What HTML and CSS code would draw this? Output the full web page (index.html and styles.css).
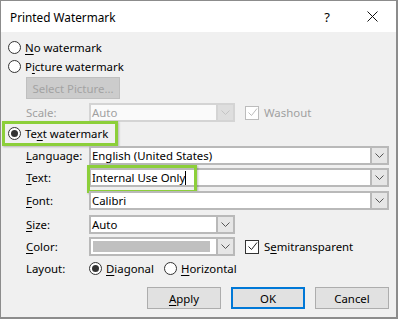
FILE: index.html
```html
<!DOCTYPE html>
<html lang="en">
<head>
    <meta charset="UTF-8">
    <title>Printed Watermark</title>
    <link rel="stylesheet" href="styles.css">
</head>
<body>

    <div class="dialog">
        <div class="titlebar">
            <span class="title">Printed Watermark</span>
            <span class="help">?</span>
            <span class="close">
                <svg width="11" height="11" viewBox="0 0 11 11"><path d="M0.5 0.5L10.5 10.5M10.5 0.5L0.5 10.5" stroke="#111" stroke-width="1" fill="none"/></svg>
            </span>
        </div>

        <div class="content">
            <div class="option opt-first"><span class="radio"></span><span><u>N</u>o watermark</span></div>
            <div class="option opt-second"><span class="radio"></span><span>P<u>i</u>cture watermark</span></div>

            <div class="indent">
                <button class="btn btn-disabled" type="button">Select Picture...</button>
            </div>

            <div class="field-row row-scale disabled">
                <span class="label">Scale:</span>
                <div class="combo combo-small">
                    <span class="value">Auto</span>
                    <span class="drop"><svg width="9" height="5" viewBox="0 0 9 5"><path d="M0.5 0.5L4.5 4.5L8.5 0.5" stroke="#c4c4c4" fill="none"/></svg></span>
                </div>
                <span class="check"><span class="box"><svg width="11" height="11" viewBox="0 0 11 11"><path d="M1.5 5.5L4.5 8.5L10 1.5" stroke="#bcbcbc" fill="none"/></svg></span><span>Washout</span></span>
            </div>

            <div class="option opt-text highlight"><span class="radio on"></span><span>Te<u>x</u>t watermark</span></div>

            <div class="field-row row-lang">
                <span class="label"><u>L</u>anguage:</span>
                <div class="combo">
                    <span class="value">English (United States)</span>
                    <span class="drop"><svg width="9" height="5" viewBox="0 0 9 5"><path d="M0.5 0.5L4.5 4.5L8.5 0.5" stroke="#555" fill="none"/></svg></span>
                </div>
            </div>

            <div class="field-row row-text">
                <span class="label"><u>T</u>ext:</span>
                <div class="combo highlight">
                    <span class="value">Internal Use Only<span class="caret"></span></span>
                    <span class="drop"><svg width="9" height="5" viewBox="0 0 9 5"><path d="M0.5 0.5L4.5 4.5L8.5 0.5" stroke="#555" fill="none"/></svg></span>
                </div>
            </div>

            <div class="field-row row-font">
                <span class="label"><u>F</u>ont:</span>
                <div class="combo">
                    <span class="value">Calibri</span>
                    <span class="drop"><svg width="9" height="5" viewBox="0 0 9 5"><path d="M0.5 0.5L4.5 4.5L8.5 0.5" stroke="#555" fill="none"/></svg></span>
                </div>
            </div>

            <div class="field-row row-size">
                <span class="label"><u>S</u>ize:</span>
                <div class="combo combo-small">
                    <span class="value">Auto</span>
                    <span class="drop"><svg width="9" height="5" viewBox="0 0 9 5"><path d="M0.5 0.5L4.5 4.5L8.5 0.5" stroke="#555" fill="none"/></svg></span>
                </div>
            </div>

            <div class="field-row row-color">
                <span class="label"><u>C</u>olor:</span>
                <div class="combo combo-small">
                    <span class="swatch"></span>
                    <span class="drop"><svg width="9" height="5" viewBox="0 0 9 5"><path d="M0.5 0.5L4.5 4.5L8.5 0.5" stroke="#555" fill="none"/></svg></span>
                </div>
                <span class="check"><span class="box"><svg width="11" height="11" viewBox="0 0 11 11"><path d="M1.5 5.5L4.5 8.5L10 1.5" stroke="#222" fill="none"/></svg></span><span>S<u>e</u>mitransparent</span></span>
            </div>

            <div class="field-row row-layout">
                <span class="label">Layout:</span>
                <span class="choice"><span class="radio on"></span><span><u>D</u>iagonal</span></span>
                <span class="choice"><span class="radio"></span><span><u>H</u>orizontal</span></span>
            </div>

            <div class="buttons">
                <button class="btn" type="button"><u>A</u>pply</button>
                <button class="btn btn-default" type="button">OK</button>
                <button class="btn" type="button">Cancel</button>
            </div>
        </div>
    </div>

</body>
</html>
```

FILE: styles.css
```css
body {
    margin: 0;
    font-family: "Noto Sans", "Open Sans", sans-serif;
    font-size: 11.4px;
    color: #000;
    background: #fff;
}

.dialog {
    width: 398px;
    height: 319px;
    box-sizing: border-box;
    border: 1px solid #8c8c8c;
    border-right-width: 2px;
    border-bottom-width: 2px;
    background: #f0f0f0;
}

.titlebar {
    height: 31px;
    background: #fff;
    display: flex;
    align-items: center;
    padding-left: 9px;
}

.titlebar .title {
    font-size: 11.8px;
}

.titlebar .help {
    margin-left: auto;
    width: 20px;
    text-align: center;
    font-size: 13px;
}

.titlebar .close {
    display: flex;
    margin-left: 30px;
    margin-right: 18px;
}

.content {
    padding: 0 7px;
}

u {
    text-decoration-thickness: 1px;
    text-underline-offset: 2px;
}

/* radio options */
.option {
    height: 18px;
    display: flex;
    align-items: center;
    gap: 4px;
    position: relative;
}

.opt-first { margin-top: 6px; }
.opt-second { margin-top: 1px; }
.opt-text { margin-top: 2px; height: 19px; }

.radio {
    width: 11px;
    height: 11px;
    border: 1px solid #333;
    border-radius: 50%;
    background: #fff;
    display: flex;
    align-items: center;
    justify-content: center;
    flex-shrink: 0;
}

.radio.on::before {
    content: "";
    width: 7px;
    height: 7px;
    border-radius: 50%;
    background: #333;
}

/* green call-outs */
.highlight::after {
    content: "";
    position: absolute;
    border: 3px solid #8ccf3a;
    box-shadow: 1px 1px 2px rgba(0, 0, 0, 0.25);
    box-sizing: border-box;
    pointer-events: none;
}

.option.highlight::after {
    left: -6px;
    top: -3px;
    width: 116px;
    height: 25px;
}

.combo.highlight::after {
    left: -4px;
    top: -5px;
    width: 110px;
    height: 28px;
}

/* buttons */
.indent {
    padding-left: 18px;
    margin-top: 2px;
}

.btn {
    font-family: inherit;
    font-size: 11.4px;
    height: 22px;
    width: 74px;
    padding: 0;
    background: #e1e1e1;
    border: 1px solid #adadad;
    color: #000;
}

.btn-disabled {
    width: 94px;
    background: #cccccc;
    border-color: #bfbfbf;
    color: #a3a3a3;
}

.btn-default {
    border: 2px solid #0078d7;
}

.buttons {
    display: flex;
    justify-content: flex-end;
    gap: 10px;
    margin-top: 10px;
}

/* label + control rows */
.field-row {
    display: flex;
    align-items: center;
    height: 19px;
    padding-left: 18px;
}

.row-scale { margin-top: 4px; }
.row-lang { margin-top: 3px; }
.row-text { margin-top: 3px; }
.row-font { margin-top: 4px; }
.row-size { margin-top: 5px; }
.row-color { margin-top: 3px; }
.row-layout { margin-top: 3px; height: 18px; }

.field-row .label {
    width: 63px;
    flex-shrink: 0;
}

.disabled {
    color: #a0a0a0;
}

.combo {
    flex: 1;
    height: 19px;
    box-sizing: border-box;
    border: 2px solid #b9b9b9;
    background: #fff;
    display: flex;
    position: relative;
}

.combo-small {
    flex: none;
    width: 146px;
}

.combo .value {
    flex: 1;
    padding-left: 1px;
    line-height: 15px;
    white-space: nowrap;
}

.combo .drop {
    width: 15px;
    border-left: 2px solid #b9b9b9;
    background: #e6e6e6;
    display: flex;
    align-items: center;
    justify-content: center;
}

.disabled .combo {
    border-color: #d4d4d4;
    background: #fafafa;
}

.disabled .combo .drop {
    border-left-color: #d4d4d4;
    background: #dedede;
}

.caret {
    display: inline-block;
    width: 1px;
    height: 14px;
    background: #000;
    vertical-align: -3px;
}

.swatch {
    flex: 1;
    margin: 2px 6px 2px 2px;
    background: #c0c0c0;
}

.check {
    display: flex;
    align-items: center;
    gap: 5px;
    margin-left: 10px;
}

.check .box {
    width: 12px;
    height: 12px;
    border: 1px solid #333;
    background: #fff;
    display: flex;
    align-items: center;
    justify-content: center;
}

.disabled .check .box {
    border-color: #bcbcbc;
}

.choice {
    display: flex;
    align-items: center;
    gap: 4px;
    margin-right: 10px;
}
```
